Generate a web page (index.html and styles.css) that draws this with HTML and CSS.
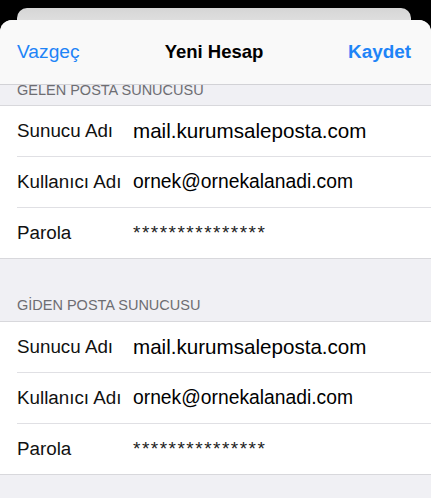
FILE: index.html
```html
<!DOCTYPE html>
<html lang="tr">
<head>
  <meta charset="UTF-8">
  <meta name="viewport" content="width=device-width, initial-scale=1.0">
  <title>Yeni Hesap</title>
  <link rel="stylesheet" href="styles.css">
</head>
<body>
  <div class="back-card"></div>
  <div class="sheet">
    <div class="nav">
      <span class="nav-button">Vazgeç</span>
      <span class="nav-title">Yeni Hesap</span>
      <span class="nav-button nav-save">Kaydet</span>
    </div>

    <div class="section-header first">GELEN POSTA SUNUCUSU</div>
    <div class="group">
      <div class="row">
        <span class="label">Sunucu Adı</span>
        <span class="value large">mail.kurumsaleposta.com</span>
      </div>
      <div class="row">
        <span class="label">Kullanıcı Adı</span>
        <span class="value">ornek@ornekalanadi.com</span>
      </div>
      <div class="row">
        <span class="label">Parola</span>
        <span class="value secret">***************</span>
      </div>
    </div>

    <div class="section-header">GİDEN POSTA SUNUCUSU</div>
    <div class="group">
      <div class="row">
        <span class="label">Sunucu Adı</span>
        <span class="value large">mail.kurumsaleposta.com</span>
      </div>
      <div class="row">
        <span class="label">Kullanıcı Adı</span>
        <span class="value">ornek@ornekalanadi.com</span>
      </div>
      <div class="row">
        <span class="label">Parola</span>
        <span class="value secret">***************</span>
      </div>
    </div>
  </div>
</body>
</html>
```

FILE: styles.css
```css
html, body {
  height: 100%;
}
body {
  font-family: "Liberation Sans", Arial, sans-serif;
  margin: 0;
  padding-top: 8px;
  background-color: #000;
  box-sizing: border-box;
  display: flex;
  flex-direction: column;
  overflow: hidden;
}
.back-card {
  height: 12px;
  margin: 0 20px 0 17px;
  border-radius: 10px 10px 0 0;
  background: linear-gradient(#d6d6d6, #dedede);
  flex-shrink: 0;
}
.sheet {
  flex: 1;
  background-color: #f0f0f4;
  border-radius: 12px 12px 0 0;
  overflow: hidden;
}
.nav {
  height: 64px;
  padding: 0 20px 0 17px;
  display: grid;
  grid-template-columns: 1fr auto 1fr;
  align-items: center;
  background-color: #f9f9f9;
  border-bottom: 1px solid #d2d2d6;
}
.nav-button {
  color: #1e84f7;
  font-size: 19.2px;
}
.nav-title {
  font-size: 18.5px;
  font-weight: bold;
  color: #000;
}
.nav-save {
  font-weight: bold;
  font-size: 18.9px;
  justify-self: end;
}
.section-header {
  padding: 38px 17px 7px;
  font-size: 14.5px;
  line-height: 17px;
  color: #6d6d72;
}
.section-header.first {
  height: 20px;
  padding: 0 17px 6.5px;
  box-sizing: border-box;
  display: flex;
  align-items: flex-end;
  overflow: hidden;
}
.group {
  background-color: #fff;
  border-top: 1px solid #d8d8dc;
  border-bottom: 1px solid #d8d8dc;
  padding-left: 17px;
}
.row {
  height: 50px;
  display: flex;
  align-items: center;
}
.row + .row {
  border-top: 1px solid #e0e0e4;
}
.label {
  width: 116px;
  flex-shrink: 0;
  font-size: 18.8px;
  color: #111;
}
.value {
  font-size: 19.3px;
  color: #000;
}
.value.large {
  font-size: 20.6px;
}
.value.secret {
  font-size: 19px;
  letter-spacing: 1.5px;
  color: #222;
}
```
